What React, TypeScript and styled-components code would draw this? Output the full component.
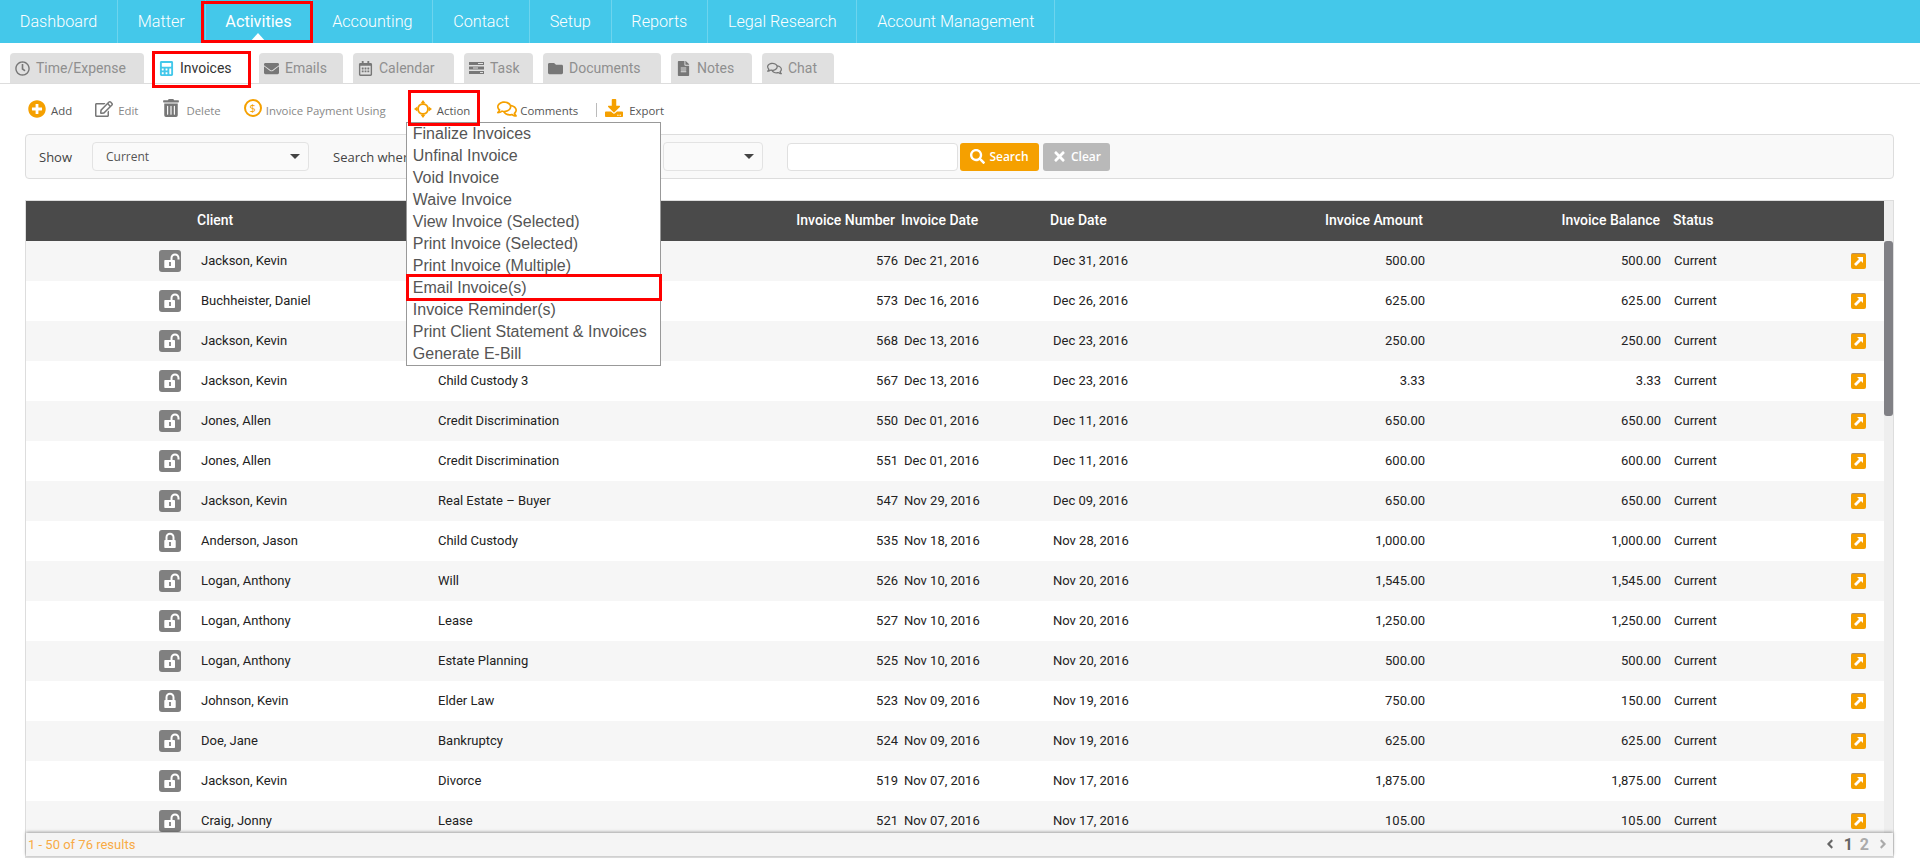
import React from "react";
import styled, { createGlobalStyle } from "styled-components";
import {
  FaRegClock, FaCalculator, FaEnvelope, FaRegCalendarAlt, FaFolder, FaFileAlt, FaRegComments,
  FaPlusCircle, FaRegEdit, FaTrashAlt, FaDownload, FaSearch, FaTimes,
  FaAngleLeft, FaAngleRight,
} from "react-icons/fa";

const Global = createGlobalStyle`
  html, body { margin: 0; padding: 0; height: 862px; overflow: hidden; background: #fff; }
  * { box-sizing: border-box; }
  body { font-family: Roboto, "Liberation Sans", sans-serif; }
`;

const Page = styled.div`
  width: 1920px;
  height: 862px;
  overflow: hidden;
  display: flex;
  flex-direction: column;
`;

/* Top navigation */
const Nav = styled.nav`
  height: 43px;
  flex: none;
  background: #44c8ea;
  display: flex;
  align-items: stretch;
`;
const NavItem = styled.div<{ $active?: boolean }>`
  position: relative;
  display: flex;
  align-items: center;
  padding: 0 19.8px 1px;
  border-right: 1px solid rgba(255, 255, 255, 0.22);
  color: #fff;
  font-size: 16.2px;
  font-weight: ${(p) => (p.$active ? 400 : 300)};
`;
const NavCaret = styled.span`
  position: absolute;
  left: 50%;
  bottom: 0;
  margin-left: -9px;
  border-left: 9px solid transparent;
  border-right: 9px solid transparent;
  border-bottom: 10px solid #fff;
`;
const Highlight = styled.span<{ $t: number; $r: number; $b: number; $l: number }>`
  position: absolute;
  top: ${(p) => p.$t}px;
  right: ${(p) => p.$r}px;
  bottom: ${(p) => p.$b}px;
  left: ${(p) => p.$l}px;
  border: 3px solid #f00;
  pointer-events: none;
  z-index: 5;
`;

/* Sub tabs */
const TabBar = styled.div`
  height: 41px;
  flex: none;
  display: flex;
  align-items: flex-end;
  gap: 10px;
  padding: 10px 0 0 10px;
  border-bottom: 1px solid #ddd;
`;
const Tab = styled.div<{ $active?: boolean; $w: number }>`
  position: relative;
  width: ${(p) => p.$w}px;
  height: 30px;
  display: flex;
  align-items: center;
  gap: 6px;
  padding-left: 5px;
  border-radius: 4px 4px 0 0;
  background: ${(p) => (p.$active ? "#fff" : "#e0e0e0")};
  color: ${(p) => (p.$active ? "#333" : "#8f8f8f")};
  font-size: 14px;
  svg { flex: none; color: ${(p) => (p.$active ? "#44c8ea" : "#777")}; font-size: 15px; }
`;
const TaskGlyph = () => (
  <svg width="15" height="14" viewBox="0 0 15 14" fill="#777">
    <path d="M0 1h15v3H0zM0 5.500h15v3H0zM0 10h15v3H0z" />
    <path d="M9 2h5v1H9zM4 6.500h5v1H4zM11 11h3v1h-3z" fill="#e0e0e0" />
  </svg>
);

/* Toolbar */
const Toolbar = styled.div`
  height: 50px;
  flex: none;
  display: flex;
  align-items: center;
  padding: 1px 0 0 28px;
  font-family: "Open Sans", sans-serif;
  font-size: 11.4px;
  color: #777;
`;
const ToolItem = styled.div<{ $ml?: number; $gap?: number }>`
  position: relative;
  display: flex;
  align-items: center;
  gap: ${(p) => p.$gap ?? 5}px;
  margin-left: ${(p) => p.$ml ?? 0}px;
  white-space: nowrap;
`;
const ToolIcon = styled.span<{ $orange?: boolean; $size: number; $up?: number }>`
  display: flex;
  font-size: ${(p) => p.$size}px;
  color: ${(p) => (p.$orange ? "#f5a000" : "#777")};
  margin-top: ${(p) => -(p.$up ?? 2)}px;
`;
const ToolLabel = styled.span<{ $dark?: boolean }>`
  color: ${(p) => (p.$dark ? "#555" : "#888")};
  margin-top: 1px;
`;
const DollarRing = styled.span`
  width: 18px;
  height: 18px;
  margin-top: -3px;
  border: 2px solid #f5a000;
  border-radius: 50%;
  color: #f5a000;
  font-size: 11px;
  line-height: 14px;
  text-align: center;
`;
const ToolRule = styled.span`
  width: 1px;
  height: 14px;
  background: #bbb;
  margin: 0 8px 0 18px;
`;
const ActionGlyph = () => (
  <svg width="18" height="18" viewBox="0 0 18 18" fill="#f5a000" stroke="none">
    <circle cx="9" cy="9" r="5" fill="none" stroke="#f5a000" strokeWidth="2" />
    <path d="M9 0l2.200 3H6.800zM9 18l-2.200-3h4.400zM0 9l3-2.200v4.400zM18 9l-3 2.200V6.800z" />
  </svg>
);

/* Action menu */
const Menu = styled.div`
  position: absolute;
  left: -8px;
  top: 20px;
  width: 255px;
  height: 244px;
  padding: 0 0 0 6px;
  background: #fff;
  border: 1px solid #999;
  font-family: "Liberation Sans", Arial, sans-serif;
  font-size: 16px;
  color: #555;
  z-index: 4;
`;
const MenuRow = styled.div`
  position: relative;
  height: 22px;
  line-height: 22px;
`;

/* Filter bar */
const FilterBar = styled.div`
  height: 45px;
  flex: none;
  margin: 0 26px 0 25px;
  display: flex;
  align-items: center;
  padding-left: 13px;
  background: #f9f9f9;
  border: 1px solid #ddd;
  border-radius: 4px;
  font-family: "Open Sans", sans-serif;
  font-size: 13px;
  color: #444;
`;
const FieldLabel = styled.span<{ $ml?: number; $w: number }>`
  width: ${(p) => p.$w}px;
  margin-left: ${(p) => p.$ml ?? 0}px;
  white-space: nowrap;
`;
const Select = styled.div<{ $w: number; $ml?: number }>`
  width: ${(p) => p.$w}px;
  height: 29px;
  margin-left: ${(p) => p.$ml ?? 0}px;
  display: flex;
  align-items: center;
  justify-content: space-between;
  padding: 0 8px 0 13px;
  background: #fafafa;
  border: 1px solid #e3e3e3;
  border-radius: 4px;
  font-size: 12px;
  color: #555;
`;
const SelectArrow = styled.span`
  border-left: 5px solid transparent;
  border-right: 5px solid transparent;
  border-top: 5px solid #444;
`;
const SearchInput = styled.div`
  width: 171px;
  height: 28px;
  margin-left: 24px;
  background: #fff;
  border: 1px solid #e0e0e0;
  border-radius: 4px;
`;
const Btn = styled.div<{ $bg: string; $w: number; $ml: number }>`
  width: ${(p) => p.$w}px;
  height: 28px;
  margin-left: ${(p) => p.$ml}px;
  display: flex;
  align-items: center;
  justify-content: center;
  gap: 4px;
  background: ${(p) => p.$bg};
  border-radius: 3px;
  color: #fff;
  font-size: 12px;
  font-weight: 600;
  svg { font-size: 15px; }
`;

/* Table */
const Frame = styled.div`
  flex: none;
  margin: 21px 26px 0 25px;
  height: 658px;
  border: 1px solid #ddd;
  border-bottom-width: 2px;
  display: flex;
  flex-direction: column;
`;
const Scroller = styled.div`
  height: 632px;
  flex: none;
  display: flex;
`;
const TableWrap = styled.div`
  width: 1858px;
  overflow: hidden;
`;
const ScrollTrack = styled.div`
  flex: 1;
  background: #eee;
  padding-top: 40px;
`;
const ScrollThumb = styled.div`
  height: 175px;
  background: #808085;
  border-radius: 3px;
`;
const COLS = "171px 237px 266px 198px 149px 203px 175px 236px 190px 33px";
const HeadRow = styled.div`
  display: grid;
  grid-template-columns: ${COLS};
  height: 40px;
  align-items: center;
  padding-bottom: 2px;
  background: #4a4a4a;
  color: #fff;
  font-size: 14px;
  font-weight: 500;
`;
const HeadCell = styled.div<{ $right?: number; $left?: number }>`
  text-align: ${(p) => (p.$right !== undefined ? "right" : "left")};
  padding-right: ${(p) => p.$right ?? 0}px;
  padding-left: ${(p) => p.$left ?? 0}px;
  white-space: nowrap;
`;
const Body = styled.div`
  height: 592px;
  overflow: hidden;
`;
const Row = styled.div`
  display: grid;
  grid-template-columns: ${COLS};
  height: 40px;
  align-items: center;
  color: #222;
  font-size: 13px;
  &:nth-child(odd) { background: #f6f6f6; }
  &:nth-child(even) { background: #fff; }
`;
const Cell = styled.div<{ $right?: boolean; $left?: number }>`
  text-align: ${(p) => (p.$right ? "right" : "left")};
  padding-left: ${(p) => p.$left ?? 0}px;
  padding-bottom: 2px;
  white-space: nowrap;
`;
const LockCell = styled.div`
  display: flex;
  justify-content: flex-end;
  padding-right: 16px;
`;
const LockBadge = styled.span`
  width: 22px;
  height: 22px;
  display: flex;
  background: #808080;
  border-radius: 3px;
`;
const LockGlyph = ({ locked }: { locked?: boolean }) => (
  <svg width="22" height="22" viewBox="0 0 22 22">
    <path
      d={locked ? "M7.500 10V7.200a3.500 3.500 0 0 1 7 0V10" : "M12.500 10V8a3.500 3.500 0 0 1 7 0v1.500"}
      fill="none"
      stroke="#fff"
      strokeWidth="2"
    />
    <rect x="5.300" y="10" width={locked ? 11.400 : 10.700} height="8" rx="0.800" fill="#fff" />
    <rect x="10.100" y="12" width="1.800" height="4" fill="#808080" />
  </svg>
);
const OpenBadge = styled.span`
  display: flex;
  align-items: center;
  justify-content: center;
  width: 15px;
  height: 16px;
  background: #f5a000;
  border-top: 1px solid #b98f5f;
  border-radius: 2px;
`;
const Footer = styled.div`
  flex: 1;
  position: relative;
  display: flex;
  align-items: center;
  justify-content: space-between;
  padding: 0 3px 1px 2px;
  background: #f5f5f5;
  box-shadow: 0 -1px 3px rgba(0, 0, 0, 0.35);
  font-size: 13px;
  color: #f8ab45;
`;
const Pager = styled.div`
  display: flex;
  align-items: center;
  gap: 7px;
  font-size: 16px;
  font-weight: 700;
  color: #aaa;
`;
const PageNow = styled.span`
  color: #666;
`;
const PagerArrow = styled.span<{ $dark?: boolean }>`
  display: flex;
  font-size: 14px;
  color: ${(p) => (p.$dark ? "#666" : "#aaa")};
`;

const navItems = ["Dashboard", "Matter", "Activities", "Accounting", "Contact", "Setup", "Reports", "Legal Research", "Account Management"];
const menuItems = ["Finalize Invoices", "Unfinal Invoice", "Void Invoice", "Waive Invoice", "View Invoice (Selected)", "Print Invoice (Selected)", "Print Invoice (Multiple)", "Email Invoice(s)", "Invoice Reminder(s)", "Print Client Statement & Invoices", "Generate E-Bill"];

type R = [string, string, string, string, string, string, string, boolean?];
const rows: R[] = [
  ["Jackson, Kevin", "Child Custody 5", "576", "Dec 21, 2016", "Dec 31, 2016", "500.00", "500.00"],
  ["Buchheister, Daniel", "Personal Injury", "573", "Dec 16, 2016", "Dec 26, 2016", "625.00", "625.00"],
  ["Jackson, Kevin", "Child Custody 4", "568", "Dec 13, 2016", "Dec 23, 2016", "250.00", "250.00"],
  ["Jackson, Kevin", "Child Custody 3", "567", "Dec 13, 2016", "Dec 23, 2016", "3.33", "3.33"],
  ["Jones, Allen", "Credit Discrimination", "550", "Dec 01, 2016", "Dec 11, 2016", "650.00", "650.00"],
  ["Jones, Allen", "Credit Discrimination", "551", "Dec 01, 2016", "Dec 11, 2016", "600.00", "600.00"],
  ["Jackson, Kevin", "Real Estate – Buyer", "547", "Nov 29, 2016", "Dec 09, 2016", "650.00", "650.00"],
  ["Anderson, Jason", "Child Custody", "535", "Nov 18, 2016", "Nov 28, 2016", "1,000.00", "1,000.00", true],
  ["Logan, Anthony", "Will", "526", "Nov 10, 2016", "Nov 20, 2016", "1,545.00", "1,545.00"],
  ["Logan, Anthony", "Lease", "527", "Nov 10, 2016", "Nov 20, 2016", "1,250.00", "1,250.00"],
  ["Logan, Anthony", "Estate Planning", "525", "Nov 10, 2016", "Nov 20, 2016", "500.00", "500.00"],
  ["Johnson, Kevin", "Elder Law", "523", "Nov 09, 2016", "Nov 19, 2016", "750.00", "150.00", true],
  ["Doe, Jane", "Bankruptcy", "524", "Nov 09, 2016", "Nov 19, 2016", "625.00", "625.00"],
  ["Jackson, Kevin", "Divorce", "519", "Nov 07, 2016", "Nov 17, 2016", "1,875.00", "1,875.00"],
  ["Craig, Jonny", "Lease", "521", "Nov 07, 2016", "Nov 17, 2016", "105.00", "105.00"],
];

export default function App() {
  return (
    <Page>
      <Global />
      <Nav>
        {navItems.map((n) => (
          <NavItem key={n} $active={n === "Activities"}>
            {n}
            {n === "Activities" && <NavCaret />}
            {n === "Activities" && <Highlight $t={1} $r={-2} $b={0} $l={-5} />}
          </NavItem>
        ))}
      </Nav>
      <TabBar>
        <Tab $w={134}><FaRegClock />Time/Expense</Tab>
        <Tab $w={95} $active><FaCalculator />Invoices<Highlight $t={-2} $r={-2} $b={-5} $l={-2} /></Tab>
        <Tab $w={84}><FaEnvelope />Emails</Tab>
        <Tab $w={101}><FaRegCalendarAlt />Calendar</Tab>
        <Tab $w={69}><TaskGlyph />Task</Tab>
        <Tab $w={118}><FaFolder />Documents</Tab>
        <Tab $w={81}><FaFileAlt />Notes</Tab>
        <Tab $w={72}><FaRegComments />Chat</Tab>
      </TabBar>
      <Toolbar>
        <ToolItem><ToolIcon $orange $size={18}><FaPlusCircle /></ToolIcon><ToolLabel $dark>Add</ToolLabel></ToolItem>
        <ToolItem $ml={23}><ToolIcon $size={18}><FaRegEdit /></ToolIcon><ToolLabel>Edit</ToolLabel></ToolItem>
        <ToolItem $ml={24} $gap={6}><ToolIcon $size={18} $up={3}><FaTrashAlt /></ToolIcon><ToolLabel>Delete</ToolLabel></ToolItem>
        <ToolItem $ml={23} $gap={4}><DollarRing>$</DollarRing><ToolLabel>Invoice Payment Using</ToolLabel></ToolItem>
        <ToolItem $ml={28}>
          <ToolIcon $orange $size={18}><ActionGlyph /></ToolIcon>
          <ToolLabel $dark>Action</ToolLabel>
          <Highlight $t={-12} $r={-10} $b={-8} $l={-6} />
          <Menu>
            {menuItems.map((m) => (
              <MenuRow key={m}>
                {m}
                {m === "Email Invoice(s)" && <Highlight $t={-3} $r={-2} $b={-2} $l={-7} />}
              </MenuRow>
            ))}
          </Menu>
        </ToolItem>
        <ToolItem $ml={27} $gap={3}><ToolIcon $orange $size={20}><FaRegComments /></ToolIcon><ToolLabel $dark>Comments</ToolLabel></ToolItem>
        <ToolRule />
        <ToolItem $gap={6}><ToolIcon $orange $size={18} $up={4}><FaDownload /></ToolIcon><ToolLabel $dark>Export</ToolLabel></ToolItem>
      </Toolbar>
      <FilterBar>
        <FieldLabel $w={53}>Show</FieldLabel>
        <Select $w={217}>Current<SelectArrow /></Select>
        <FieldLabel $w={330} $ml={24}>Search where</FieldLabel>
        <Select $w={100}><span /><SelectArrow /></Select>
        <SearchInput />
        <Btn $bg="#f5a000" $w={79} $ml={2}><FaSearch />Search</Btn>
        <Btn $bg="#b9b9b9" $w={67} $ml={4}><FaTimes />Clear</Btn>
      </FilterBar>
      <Frame>
        <Scroller>
          <TableWrap>
            <HeadRow>
              <HeadCell />
              <HeadCell>Client</HeadCell>
              <HeadCell $left={4}>Matter</HeadCell>
              <HeadCell $right={3}>Invoice Number</HeadCell>
              <HeadCell $left={3}>Invoice Date</HeadCell>
              <HeadCell $left={3}>Due Date</HeadCell>
              <HeadCell $right={2}>Invoice Amount</HeadCell>
              <HeadCell $right={1}>Invoice Balance</HeadCell>
              <HeadCell $left={12}>Status</HeadCell>
              <HeadCell />
            </HeadRow>
            <Body>
              {rows.map((r, i) => (
                <Row key={i}>
                  <LockCell><LockBadge><LockGlyph locked={r[7]} /></LockBadge></LockCell>
                  <Cell $left={4}>{r[0]}</Cell>
                  <Cell $left={4}>{r[1]}</Cell>
                  <Cell $right>{r[2]}</Cell>
                  <Cell $left={6}>{r[3]}</Cell>
                  <Cell $left={6}>{r[4]}</Cell>
                  <Cell $right>{r[5]}</Cell>
                  <Cell $right>{r[6]}</Cell>
                  <Cell $left={13}>Current</Cell>
                  <OpenBadge>
                    <svg width="11" height="11" viewBox="0 0 11 11" fill="#fff">
                      <path d="M4 1h6v6L8 5 3 10 1 8l5-5z" />
                    </svg>
                  </OpenBadge>
                </Row>
              ))}
            </Body>
          </TableWrap>
          <ScrollTrack><ScrollThumb /></ScrollTrack>
        </Scroller>
        <Footer>
          <span>1 - 50 of 76 results</span>
          <Pager>
            <PagerArrow $dark><FaAngleLeft /></PagerArrow>
            <PageNow>1</PageNow>
            <span>2</span>
            <PagerArrow><FaAngleRight /></PagerArrow>
          </Pager>
        </Footer>
      </Frame>
    </Page>
  );
}
